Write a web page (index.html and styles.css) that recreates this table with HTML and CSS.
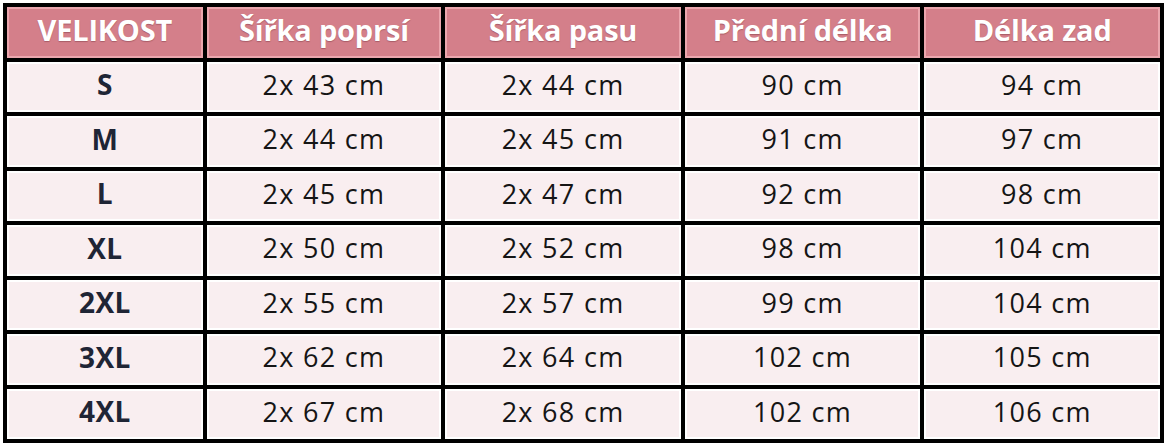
FILE: index.html
```html
<!DOCTYPE html>
<html lang="cs">
<head>
<meta charset="utf-8">
<title>Velikostní tabulka</title>
<link rel="stylesheet" href="styles.css">
</head>
<body>
<div class="sizes">
  <div class="cell head">VELIKOST</div>
  <div class="cell head">Šířka poprsí</div>
  <div class="cell head">Šířka pasu</div>
  <div class="cell head">Přední délka</div>
  <div class="cell head">Délka zad</div>

  <div class="cell size">S</div>
  <div class="cell">2x 43 cm</div>
  <div class="cell">2x 44 cm</div>
  <div class="cell">90 cm</div>
  <div class="cell">94 cm</div>

  <div class="cell size">M</div>
  <div class="cell">2x 44 cm</div>
  <div class="cell">2x 45 cm</div>
  <div class="cell">91 cm</div>
  <div class="cell">97 cm</div>

  <div class="cell size">L</div>
  <div class="cell">2x 45 cm</div>
  <div class="cell">2x 47 cm</div>
  <div class="cell">92 cm</div>
  <div class="cell">98 cm</div>

  <div class="cell size">XL</div>
  <div class="cell">2x 50 cm</div>
  <div class="cell">2x 52 cm</div>
  <div class="cell">98 cm</div>
  <div class="cell">104 cm</div>

  <div class="cell size">2XL</div>
  <div class="cell">2x 55 cm</div>
  <div class="cell">2x 57 cm</div>
  <div class="cell">99 cm</div>
  <div class="cell">104 cm</div>

  <div class="cell size">3XL</div>
  <div class="cell">2x 62 cm</div>
  <div class="cell">2x 64 cm</div>
  <div class="cell">102 cm</div>
  <div class="cell">105 cm</div>

  <div class="cell size">4XL</div>
  <div class="cell">2x 67 cm</div>
  <div class="cell">2x 68 cm</div>
  <div class="cell">102 cm</div>
  <div class="cell">106 cm</div>
</div>
</body>
</html>
```
FILE: styles.css
```css
html, body {
  margin: 0;
  padding: 0;
  background: #ffffff;
}
body {
  padding: 3px 0 0 3px;
  font-family: "Open Sans", "DejaVu Sans", sans-serif;
}
.sizes {
  width: 1161px;
  height: 440px;
  box-sizing: border-box;
  background: #000;
  padding: 4px;
  display: grid;
  grid-template-columns: 196fr 235fr 236fr 236fr 236fr;
  grid-template-rows: repeat(8, 1fr);
  gap: 4px;
}
.cell {
  display: flex;
  align-items: center;
  justify-content: center;
  background: #f9eef0;
  border: 2px solid #ffffff;
  font-size: 27px;
  letter-spacing: 1.3px;
  color: #151515;
  line-height: 1;
  padding-bottom: 5px;
  white-space: nowrap;
}
.head {
  background: #d47f8a;
  border-color: #eba6ae;
  color: #ffffff;
  font-weight: 700;
  font-size: 29px;
  letter-spacing: -0.2px;
  text-shadow: 0 1px 1px rgba(90, 30, 40, 0.35);
  padding-bottom: 6px;
}
.size {
  color: #1f2535;
  font-weight: 700;
  font-size: 28px;
  letter-spacing: 0.3px;
}
```
